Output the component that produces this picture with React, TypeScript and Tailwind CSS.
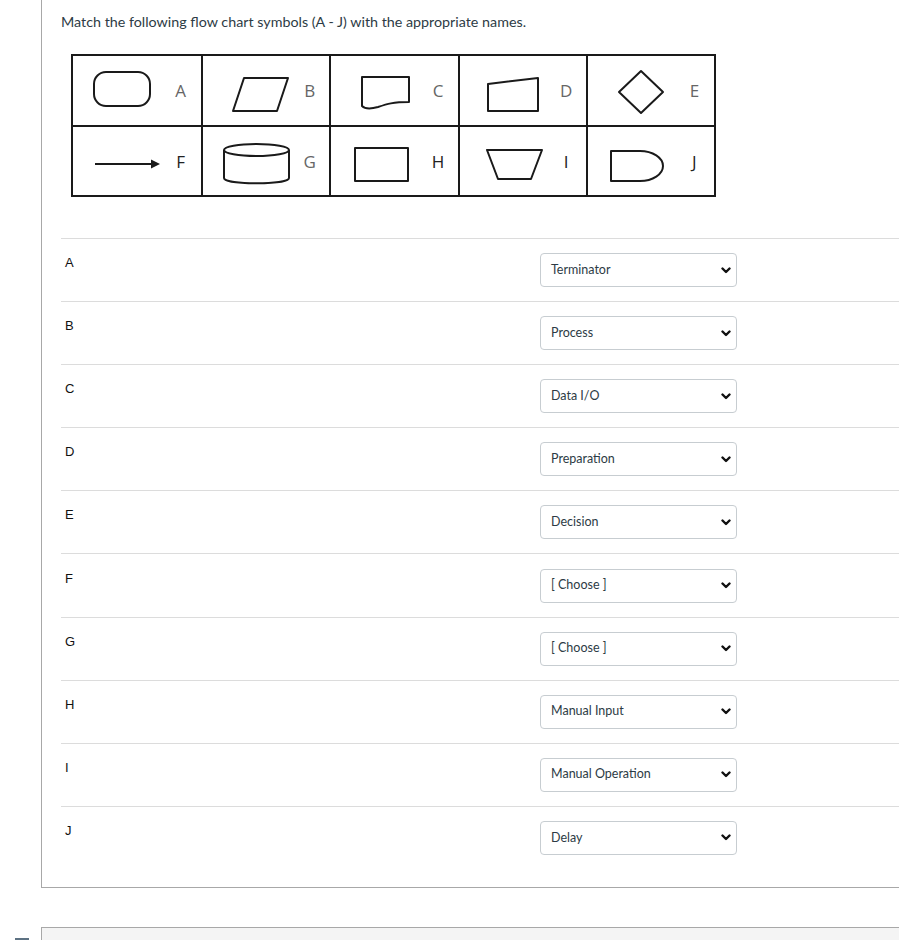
import React from "react";

type Cell = { letter: string; dark?: boolean; shape: React.ReactNode };

const stroke = { fill: "none", stroke: "#1a1a1a", strokeWidth: 2, strokeLinejoin: "round" as const };

// Shapes drawn in cell coordinates (inner cell origin), 96 x 69 box
const topRow: Cell[] = [
  { letter: "A", shape: <rect x="21" y="16" width="56" height="34" rx="12" {...stroke} /> },
  { letter: "B", shape: <polygon points="41,22 85,22 74,55 30,55" {...stroke} /> },
  {
    letter: "C",
    shape: <path d="M31 21 H78 V46 C62 46 56 48 47 51 C40 53 34 53 31 50 Z" {...stroke} />,
  },
  { letter: "D", shape: <polygon points="28,28 78,22 78,55 28,55" {...stroke} /> },
  { letter: "E", shape: <polygon points="31,36 53,15 75,36 53,57" {...stroke} /> },
];

const bottomRow: Cell[] = [
  {
    letter: "F",
    dark: true,
    shape: (
      <>
        <line x1="22" y1="37" x2="79" y2="37" stroke="#1a1a1a" strokeWidth="2" />
        <polygon points="78,32.5 87,37 78,41.5" fill="#1a1a1a" />
      </>
    ),
  },
  {
    letter: "G",
    shape: (
      <>
        <path d="M21 23 V51 C21 58 86 58 86 51 V23" {...stroke} />
        <ellipse cx="53.5" cy="23" rx="32.5" ry="6" {...stroke} />
      </>
    ),
  },
  { letter: "H", dark: true, shape: <rect x="24" y="21" width="53" height="33" {...stroke} /> },
  { letter: "I", dark: true, shape: <polygon points="27,23 82,23 71,52 38,52" {...stroke} /> },
  { letter: "J", dark: true, shape: <path d="M23 24 H52 A23 15 0 0 1 52 54 H23 Z" {...stroke} /> },
];

const answers = [
  { letter: "A", value: "Terminator" },
  { letter: "B", value: "Process" },
  { letter: "C", value: "Data I/O" },
  { letter: "D", value: "Preparation" },
  { letter: "E", value: "Decision" },
  { letter: "F", value: "[ Choose ]" },
  { letter: "G", value: "[ Choose ]" },
  { letter: "H", value: "Manual Input" },
  { letter: "I", value: "Manual Operation" },
  { letter: "J", value: "Delay" },
];

const SymbolCell = ({ cell, first }: { cell: Cell; first: boolean }) => (
  <div className={`flex items-center h-full ${first ? "" : "border-l-2 border-[#1a1a1a]"}`}>
    <svg width="96" height="69" viewBox="0 0 96 69" className="shrink-0">
      {cell.shape}
    </svg>
    <span
      className={`flex-1 pr-[9px] text-center text-[17px] leading-none ${cell.dark ? "text-[#222]" : "text-[#666]"}`}
      style={{ fontFamily: '"Open Sans", sans-serif' }}
    >
      {cell.letter}
    </span>
  </div>
);

const AnswerRow = ({ letter, value }: { letter: string; value: string }) => (
  <div className="flex border-t border-[#dcdcdc] py-[14.05px]">
    <div
      className="w-[479px] shrink-0 pl-1 text-[13px] leading-[20px] text-[#111]"
      style={{ fontFamily: '"Liberation Sans", Arial, sans-serif' }}
    >
      {letter}
    </div>
    <div className="w-[197px] h-[34px] shrink-0 flex items-center justify-between border border-[#c7cdd1] rounded-[4px] pl-[10px] pr-[5px] bg-white">
      <span className="text-[12.5px] text-[#2d3b45]">{value}</span>
      <svg width="10" height="7" viewBox="0 0 10 7">
        <path d="M1.5 1.5 L5 5 L8.5 1.5" fill="none" stroke="#111" strokeWidth="2.4" strokeLinecap="round" strokeLinejoin="round" />
      </svg>
    </div>
  </div>
);

export default function App() {
  return (
    <div className="min-h-[940px] bg-white overflow-hidden" style={{ fontFamily: "Lato, sans-serif" }}>
      <div className="flex">
        <div className="w-[41px] shrink-0" />
        <div className="flex-1 border-l border-b border-[#a8a8a8] pl-[19px] pb-[18px]">
          <p className="pt-[13px] text-[14.3px] leading-[18px] text-[#2d3b45]">
            Match the following flow chart symbols (A - J) with the appropriate names.
          </p>

          <div className="ml-[10px] mt-[23px] w-[645px] border-2 border-[#1a1a1a]">
            <div className="grid grid-cols-5 h-[69px]">
              {topRow.map((c, i) => (
                <SymbolCell key={c.letter} cell={c} first={i === 0} />
              ))}
            </div>
            <div className="grid grid-cols-5 h-[70px] border-t-2 border-[#1a1a1a]">
              {bottomRow.map((c, i) => (
                <SymbolCell key={c.letter} cell={c} first={i === 0} />
              ))}
            </div>
          </div>

          <div className="mt-[41px]">
            {answers.map((a) => (
              <AnswerRow key={a.letter} letter={a.letter} value={a.value} />
            ))}
          </div>
        </div>
      </div>

      <div className="h-[39px]" />

      <div className="flex">
        <div className="w-[41px] shrink-0 pl-[15px] pt-[11px]">
          <div className="w-[14px] h-[14px] bg-[#5d7283]" />
        </div>
        <div className="flex-1 h-[80px] border-l border-t border-[#a8a8a8] bg-[#f4f4f4] pl-5 pt-[9px]">
          <span className="text-[15px] font-bold text-[#2d3b45]">Question 12</span>
        </div>
      </div>
    </div>
  );
}
